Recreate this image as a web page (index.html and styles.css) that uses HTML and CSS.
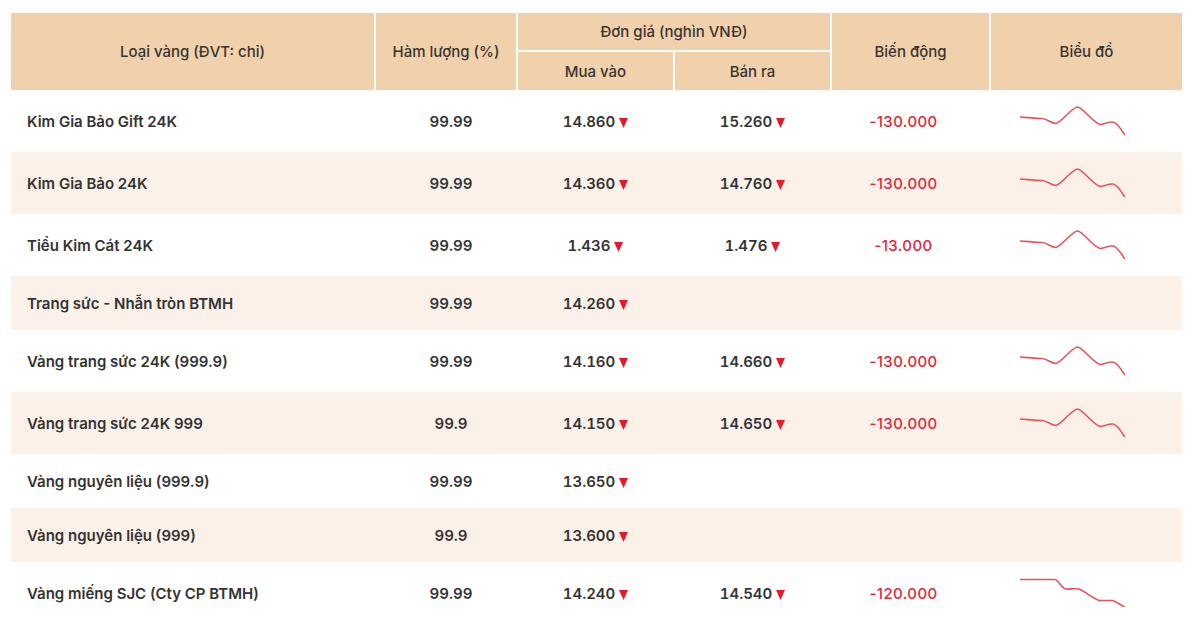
FILE: index.html
```html
<!DOCTYPE html>
<html lang="vi">
<head>
<meta charset="utf-8">
<title>Giá vàng</title>
<link rel="stylesheet" href="styles.css">
</head>
<body>
<div class="wrap">
<table class="gold">
  <colgroup>
    <col class="c-name"><col class="c-pct"><col class="c-buy"><col class="c-sell"><col class="c-chg"><col class="c-chart">
  </colgroup>
  <thead>
    <tr class="h1">
      <th rowspan="2">Loại vàng (ĐVT: chỉ)</th>
      <th rowspan="2">Hàm lượng (%)</th>
      <th colspan="2">Đơn giá (nghìn VNĐ)</th>
      <th rowspan="2">Biến động</th>
      <th rowspan="2">Biểu đồ</th>
    </tr>
    <tr class="h2">
      <th>Mua vào</th>
      <th>Bán ra</th>
    </tr>
  </thead>
  <tbody>
    <tr>
      <td class="name">Kim Gia Bảo Gift 24K</td>
      <td class="pct">99.99</td>
      <td class="num">14.860<svg class="dn" viewBox="0 0 9 10"><path d="M0 0H9L4.5 10Z"/></svg></td>
      <td class="num">15.260<svg class="dn" viewBox="0 0 9 10"><path d="M0 0H9L4.5 10Z"/></svg></td>
      <td class="chg">-130.000</td>
      <td class="chart"><svg class="spark" viewBox="0 0 106 30"><path d="M0.5 11 C8 11.5 15 12.5 22 12.5 C27 12.5 31 17.5 36 17.5 C42 16 52 1 57.5 1 C63 1 74 18.5 81 18.5 C85 18 89 15.5 93 16 C97 16.5 101 23 104.5 28.5"/></svg></td>
    </tr>
    <tr class="alt">
      <td class="name">Kim Gia Bảo 24K</td>
      <td class="pct">99.99</td>
      <td class="num">14.360<svg class="dn" viewBox="0 0 9 10"><path d="M0 0H9L4.5 10Z"/></svg></td>
      <td class="num">14.760<svg class="dn" viewBox="0 0 9 10"><path d="M0 0H9L4.5 10Z"/></svg></td>
      <td class="chg">-130.000</td>
      <td class="chart"><svg class="spark" viewBox="0 0 106 30"><path d="M0.5 11 C8 11.5 15 12.5 22 12.5 C27 12.5 31 17.5 36 17.5 C42 16 52 1 57.5 1 C63 1 74 18.5 81 18.5 C85 18 89 15.5 93 16 C97 16.5 101 23 104.5 28.5"/></svg></td>
    </tr>
    <tr>
      <td class="name">Tiểu Kim Cát 24K</td>
      <td class="pct">99.99</td>
      <td class="num">1.436<svg class="dn" viewBox="0 0 9 10"><path d="M0 0H9L4.5 10Z"/></svg></td>
      <td class="num">1.476<svg class="dn" viewBox="0 0 9 10"><path d="M0 0H9L4.5 10Z"/></svg></td>
      <td class="chg">-13.000</td>
      <td class="chart"><svg class="spark" viewBox="0 0 106 30"><path d="M0.5 11 C8 11.5 15 12.5 22 12.5 C27 12.5 31 17.5 36 17.5 C42 16 52 1 57.5 1 C63 1 74 18.5 81 18.5 C85 18 89 15.5 93 16 C97 16.5 101 23 104.5 28.5"/></svg></td>
    </tr>
    <tr class="alt">
      <td class="name">Trang sức - Nhẫn tròn BTMH</td>
      <td class="pct">99.99</td>
      <td class="num">14.260<svg class="dn" viewBox="0 0 9 10"><path d="M0 0H9L4.5 10Z"/></svg></td>
      <td class="num"></td>
      <td class="chg"></td>
      <td class="chart"></td>
    </tr>
    <tr>
      <td class="name">Vàng trang sức 24K (999.9)</td>
      <td class="pct">99.99</td>
      <td class="num">14.160<svg class="dn" viewBox="0 0 9 10"><path d="M0 0H9L4.5 10Z"/></svg></td>
      <td class="num">14.660<svg class="dn" viewBox="0 0 9 10"><path d="M0 0H9L4.5 10Z"/></svg></td>
      <td class="chg">-130.000</td>
      <td class="chart"><svg class="spark" viewBox="0 0 106 30"><path d="M0.5 11 C8 11.5 15 12.5 22 12.5 C27 12.5 31 17.5 36 17.5 C42 16 52 1 57.5 1 C63 1 74 18.5 81 18.5 C85 18 89 15.5 93 16 C97 16.5 101 23 104.5 28.5"/></svg></td>
    </tr>
    <tr class="alt">
      <td class="name">Vàng trang sức 24K 999</td>
      <td class="pct">99.9</td>
      <td class="num">14.150<svg class="dn" viewBox="0 0 9 10"><path d="M0 0H9L4.5 10Z"/></svg></td>
      <td class="num">14.650<svg class="dn" viewBox="0 0 9 10"><path d="M0 0H9L4.5 10Z"/></svg></td>
      <td class="chg">-130.000</td>
      <td class="chart"><svg class="spark" viewBox="0 0 106 30"><path d="M0.5 11 C8 11.5 15 12.5 22 12.5 C27 12.5 31 17.5 36 17.5 C42 16 52 1 57.5 1 C63 1 74 18.5 81 18.5 C85 18 89 15.5 93 16 C97 16.5 101 23 104.5 28.5"/></svg></td>
    </tr>
    <tr>
      <td class="name">Vàng nguyên liệu (999.9)</td>
      <td class="pct">99.99</td>
      <td class="num">13.650<svg class="dn" viewBox="0 0 9 10"><path d="M0 0H9L4.5 10Z"/></svg></td>
      <td class="num"></td>
      <td class="chg"></td>
      <td class="chart"></td>
    </tr>
    <tr class="alt">
      <td class="name">Vàng nguyên liệu (999)</td>
      <td class="pct">99.9</td>
      <td class="num">13.600<svg class="dn" viewBox="0 0 9 10"><path d="M0 0H9L4.5 10Z"/></svg></td>
      <td class="num"></td>
      <td class="chg"></td>
      <td class="chart"></td>
    </tr>
    <tr>
      <td class="name">Vàng miếng SJC (Cty CP BTMH)</td>
      <td class="pct">99.99</td>
      <td class="num">14.240<svg class="dn" viewBox="0 0 9 10"><path d="M0 0H9L4.5 10Z"/></svg></td>
      <td class="num">14.540<svg class="dn" viewBox="0 0 9 10"><path d="M0 0H9L4.5 10Z"/></svg></td>
      <td class="chg">-120.000</td>
      <td class="chart"><svg class="spark" viewBox="0 0 106 30"><path d="M0.5 1.5 L35 1.5 C38 1.5 41 9.5 45.5 11 C49 11.5 55 10 59 11 C65 13 75 22.5 80.5 22.5 L92 22.5 C96 23 100 27 104 28.5"/></svg></td>
    </tr>
  </tbody>
</table>
</div>
</body>
</html>
```

FILE: styles.css
```css
* { box-sizing: border-box; }
html, body { margin: 0; padding: 0; background: #fff; }
body {
  font-family: Inter, "Noto Sans", "Liberation Sans", sans-serif;
  color: #333;
}
.wrap { padding: 13px 18px 0 11px; }
.gold {
  width: 1171px;
  border-collapse: collapse;
  table-layout: fixed;
}
.c-name { width: 364px; }
.c-pct { width: 142px; }
.c-buy { width: 157px; }
.c-sell { width: 157px; }
.c-chg { width: 159px; }
.c-chart { width: 192px; }

.gold th {
  background: #f0d1ab;
  font-weight: 500;
  font-size: 15px;
  color: #3a3430;
  border: 2px solid #fff;
  padding: 0;
  text-align: center;
  vertical-align: middle;
}
.gold thead tr:first-child th { border-top: 0; }
.gold thead th:first-child { border-left: 0; }
.gold thead th:last-child { border-right: 0; }
.h1 th { height: 38px; }
.h2 th { height: 39px; }
.gold thead tr.h2 th { border-left: 2px solid #fff; border-right: 2px solid #fff; border-bottom: 0; }
.gold thead tr.h1 th[rowspan] { border-bottom: 0; }

.gold td {
  font-size: 15px;
  font-weight: 600;
  color: #333;
  height: 54px;
  padding: 0;
  vertical-align: middle;
  text-align: center;
  white-space: nowrap;
}
.gold td.num, .gold td.pct { font-variant-numeric: tabular-nums; }
.gold tr.alt td { background: #fbf1e9; }
.gold td.name { text-align: left; padding-left: 16px; }
.gold td.pct { padding-left: 10px; }
.dn {
  width: 9px;
  height: 10px;
  margin-left: 4px;
  vertical-align: -1px;
  fill: #e8172b;
}
.gold td.chg {
  color: #e8243a;
  font-weight: 500;
  letter-spacing: 0.4px;
  padding-right: 14px;
}
.gold td.chart {
  text-align: left;
  padding: 16px 0 16px 30px;
}
.spark {
  display: block;
  width: 106px;
  height: 30px;
  fill: none;
  stroke: #e8525a;
  stroke-width: 1.6;
  stroke-linecap: round;
  stroke-linejoin: round;
}
```
